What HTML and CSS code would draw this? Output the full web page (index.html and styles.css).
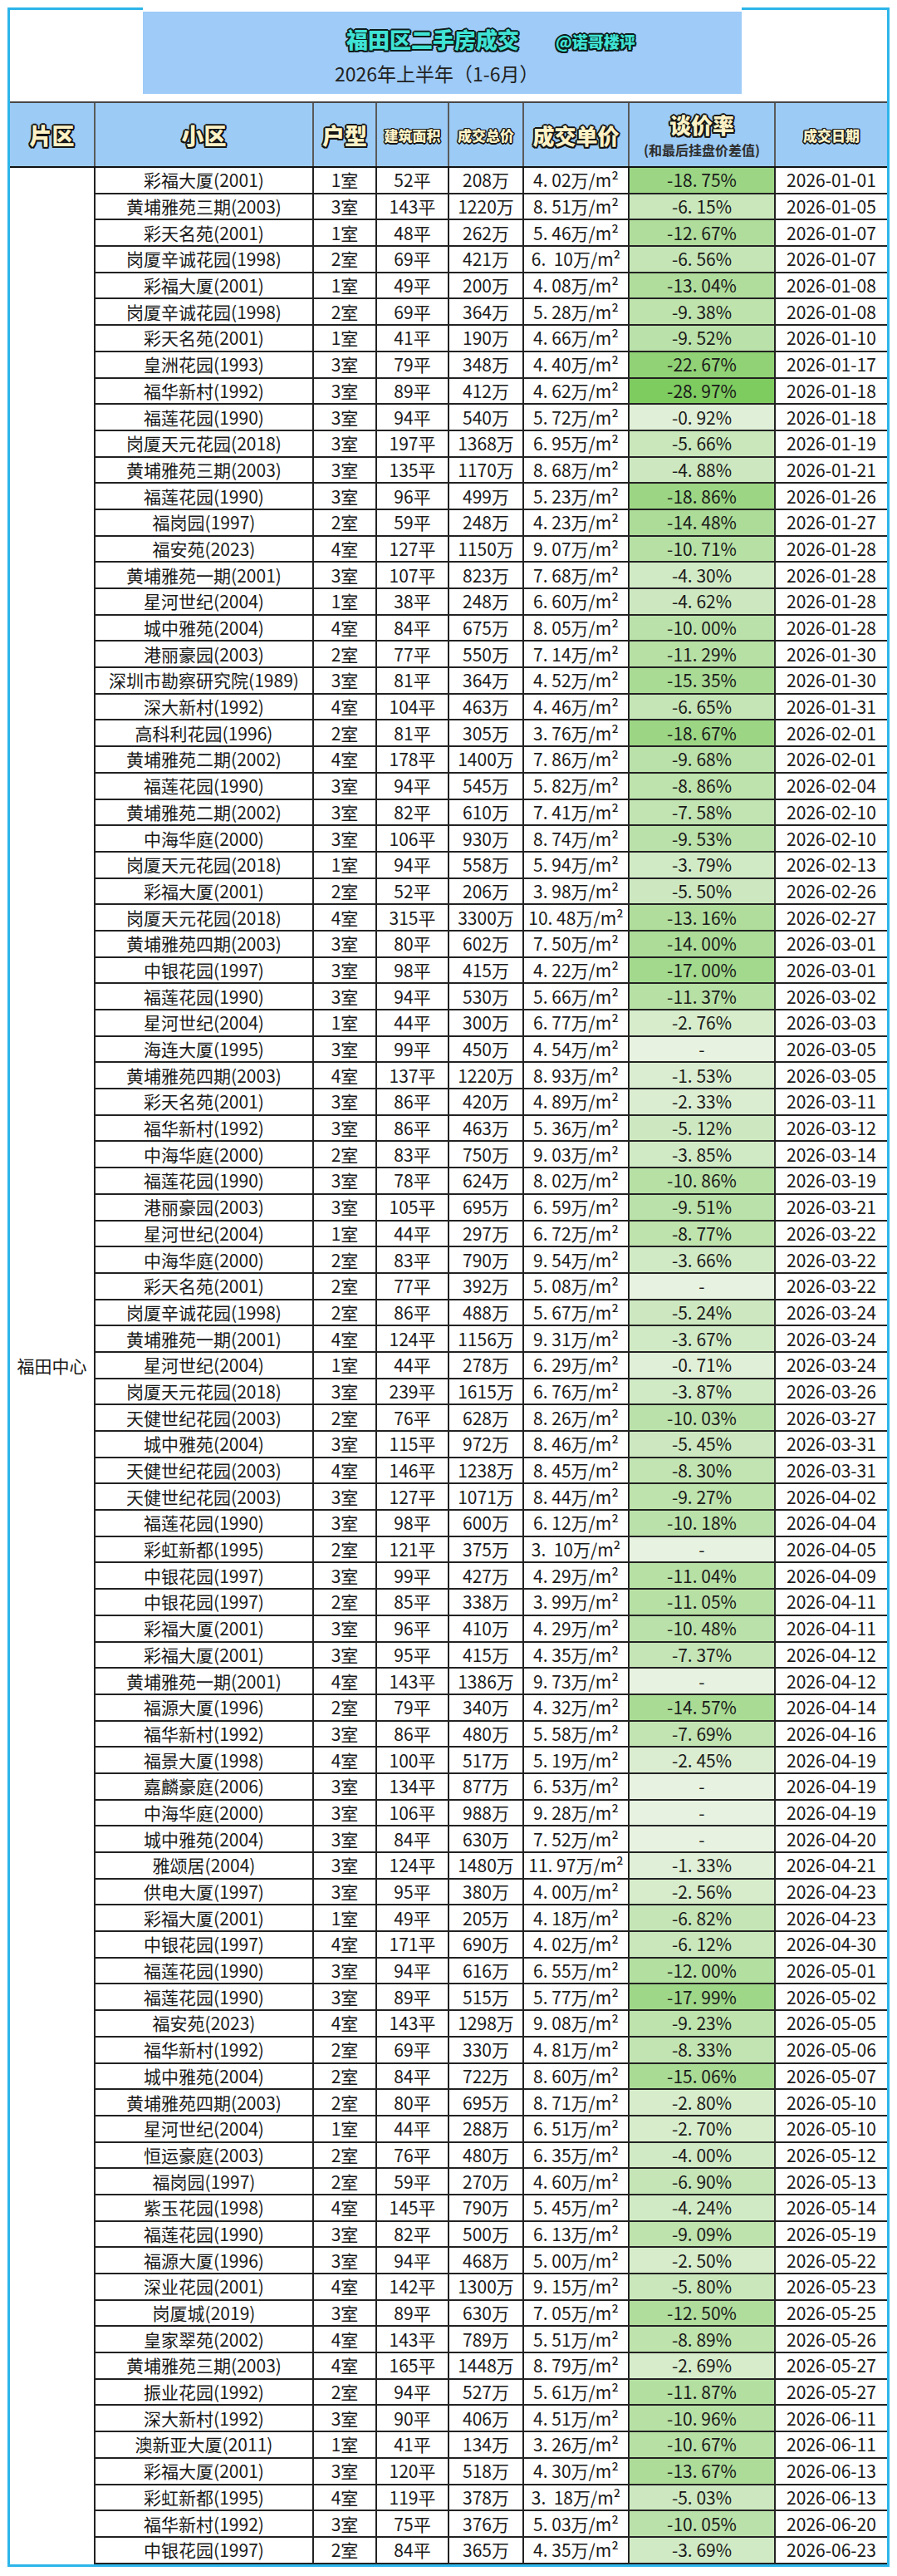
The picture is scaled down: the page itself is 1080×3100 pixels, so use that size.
FILE: index.html
```html
<!DOCTYPE html>
<html lang="zh-CN">
<head>
<meta charset="utf-8">
<title>福田区二手房成交</title>
<link rel="stylesheet" href="styles.css">
</head>
<body>
<div class="frame">
  <div class="top">
    <div class="top-side top-left"></div>
    <div class="banner">
      <div class="title-row">
        <span class="title">福田区二手房成交</span>
        <span class="handle">@诺哥楼评</span>
      </div>
      <div class="subtitle">2026年上半年（1-6月）</div>
    </div>
    <div class="top-side top-right"></div>
  </div>

  <div class="thead">
    <div class="th big">片区</div>
    <div class="th big">小区</div>
    <div class="th big">户型</div>
    <div class="th small">建筑面积</div>
    <div class="th small">成交总价</div>
    <div class="th mid">成交单价</div>
    <div class="th stack"><span class="mid">谈价率</span><span class="note">(和最后挂盘价差值)</span></div>
    <div class="th small">成交日期</div>
  </div>

  <div class="tbody">
    <div class="area">福田中心</div>
<div>彩福大厦(2001)</div><div>1室</div><div>52平</div><div>208万</div><div>4. 02万/m²</div><div style="background:#9cd684">-18. 75%</div><div>2026-01-01</div>
<div>黄埔雅苑三期(2003)</div><div>3室</div><div>143平</div><div>1220万</div><div>8. 51万/m²</div><div style="background:#c9e7bb">-6. 15%</div><div>2026-01-05</div>
<div>彩天名苑(2001)</div><div>1室</div><div>48平</div><div>262万</div><div>5. 46万/m²</div><div style="background:#b0dd9c">-12. 67%</div><div>2026-01-07</div>
<div>岗厦辛诚花园(1998)</div><div>2室</div><div>69平</div><div>421万</div><div>6.&nbsp; 10万/m²</div><div style="background:#c5e5b7">-6. 56%</div><div>2026-01-07</div>
<div>彩福大厦(2001)</div><div>1室</div><div>49平</div><div>200万</div><div>4. 08万/m²</div><div style="background:#b0dd9c">-13. 04%</div><div>2026-01-08</div>
<div>岗厦辛诚花园(1998)</div><div>2室</div><div>69平</div><div>364万</div><div>5. 28万/m²</div><div style="background:#bee3ad">-9. 38%</div><div>2026-01-08</div>
<div>彩天名苑(2001)</div><div>1室</div><div>41平</div><div>190万</div><div>4. 66万/m²</div><div style="background:#bae1a9">-9. 52%</div><div>2026-01-10</div>
<div>皇洲花园(1993)</div><div>3室</div><div>79平</div><div>348万</div><div>4. 40万/m²</div><div style="background:#90d275">-22. 67%</div><div>2026-01-17</div>
<div>福华新村(1992)</div><div>3室</div><div>89平</div><div>412万</div><div>4. 62万/m²</div><div style="background:#7ecb5f">-28. 97%</div><div>2026-01-18</div>
<div>福莲花园(1990)</div><div>3室</div><div>94平</div><div>540万</div><div>5. 72万/m²</div><div style="background:#e0efd7">-0. 92%</div><div>2026-01-18</div>
<div>岗厦天元花园(2018)</div><div>3室</div><div>197平</div><div>1368万</div><div>6. 95万/m²</div><div style="background:#c9e7bb">-5. 66%</div><div>2026-01-19</div>
<div>黄埔雅苑三期(2003)</div><div>3室</div><div>135平</div><div>1170万</div><div>8. 68万/m²</div><div style="background:#cde8c0">-4. 88%</div><div>2026-01-21</div>
<div>福莲花园(1990)</div><div>3室</div><div>96平</div><div>499万</div><div>5. 23万/m²</div><div style="background:#9cd684">-18. 86%</div><div>2026-01-26</div>
<div>福岗园(1997)</div><div>2室</div><div>59平</div><div>248万</div><div>4. 23万/m²</div><div style="background:#acdc98">-14. 48%</div><div>2026-01-27</div>
<div>福安苑(2023)</div><div>4室</div><div>127平</div><div>1150万</div><div>9. 07万/m²</div><div style="background:#b7e0a5">-10. 71%</div><div>2026-01-28</div>
<div>黄埔雅苑一期(2001)</div><div>3室</div><div>107平</div><div>823万</div><div>7. 68万/m²</div><div style="background:#d1eac6">-4. 30%</div><div>2026-01-28</div>
<div>星河世纪(2004)</div><div>1室</div><div>38平</div><div>248万</div><div>6. 60万/m²</div><div style="background:#cde8c0">-4. 62%</div><div>2026-01-28</div>
<div>城中雅苑(2004)</div><div>4室</div><div>84平</div><div>675万</div><div>8. 05万/m²</div><div style="background:#bae1a9">-10. 00%</div><div>2026-01-28</div>
<div>港丽豪园(2003)</div><div>2室</div><div>77平</div><div>550万</div><div>7. 14万/m²</div><div style="background:#b7e0a5">-11. 29%</div><div>2026-01-30</div>
<div>深圳市勘察研究院(1989)</div><div>3室</div><div>81平</div><div>364万</div><div>4. 52万/m²</div><div style="background:#a9db94">-15. 35%</div><div>2026-01-30</div>
<div>深大新村(1992)</div><div>4室</div><div>104平</div><div>463万</div><div>4. 46万/m²</div><div style="background:#c5e5b7">-6. 65%</div><div>2026-01-31</div>
<div>高科利花园(1996)</div><div>2室</div><div>81平</div><div>305万</div><div>3. 76万/m²</div><div style="background:#9cd684">-18. 67%</div><div>2026-02-01</div>
<div>黄埔雅苑二期(2002)</div><div>4室</div><div>178平</div><div>1400万</div><div>7. 86万/m²</div><div style="background:#bae1a9">-9. 68%</div><div>2026-02-01</div>
<div>福莲花园(1990)</div><div>3室</div><div>94平</div><div>545万</div><div>5. 82万/m²</div><div style="background:#bee3ad">-8. 86%</div><div>2026-02-04</div>
<div>黄埔雅苑二期(2002)</div><div>3室</div><div>82平</div><div>610万</div><div>7. 41万/m²</div><div style="background:#c2e4b2">-7. 58%</div><div>2026-02-10</div>
<div>中海华庭(2000)</div><div>3室</div><div>106平</div><div>930万</div><div>8. 74万/m²</div><div style="background:#bae1a9">-9. 53%</div><div>2026-02-10</div>
<div>岗厦天元花园(2018)</div><div>1室</div><div>94平</div><div>558万</div><div>5. 94万/m²</div><div style="background:#d1eac6">-3. 79%</div><div>2026-02-13</div>
<div>彩福大厦(2001)</div><div>2室</div><div>52平</div><div>206万</div><div>3. 98万/m²</div><div style="background:#cde8c0">-5. 50%</div><div>2026-02-26</div>
<div>岗厦天元花园(2018)</div><div>4室</div><div>315平</div><div>3300万</div><div>10. 48万/m²</div><div style="background:#b0dd9c">-13. 16%</div><div>2026-02-27</div>
<div>黄埔雅苑四期(2003)</div><div>3室</div><div>80平</div><div>602万</div><div>7. 50万/m²</div><div style="background:#acdc98">-14. 00%</div><div>2026-03-01</div>
<div>中银花园(1997)</div><div>3室</div><div>98平</div><div>415万</div><div>4. 22万/m²</div><div style="background:#a2d98c">-17. 00%</div><div>2026-03-01</div>
<div>福莲花园(1990)</div><div>3室</div><div>94平</div><div>530万</div><div>5. 66万/m²</div><div style="background:#b7e0a5">-11. 37%</div><div>2026-03-02</div>
<div>星河世纪(2004)</div><div>1室</div><div>44平</div><div>300万</div><div>6. 77万/m²</div><div style="background:#d6eccb">-2. 76%</div><div>2026-03-03</div>
<div>海连大厦(1995)</div><div>3室</div><div>99平</div><div>450万</div><div>4. 54万/m²</div><div style="background:#e7f2e0">-</div><div>2026-03-05</div>
<div>黄埔雅苑四期(2003)</div><div>4室</div><div>137平</div><div>1220万</div><div>8. 93万/m²</div><div style="background:#dbedd1">-1. 53%</div><div>2026-03-05</div>
<div>彩天名苑(2001)</div><div>3室</div><div>86平</div><div>420万</div><div>4. 89万/m²</div><div style="background:#dbedd1">-2. 33%</div><div>2026-03-11</div>
<div>福华新村(1992)</div><div>3室</div><div>86平</div><div>463万</div><div>5. 36万/m²</div><div style="background:#cde8c0">-5. 12%</div><div>2026-03-12</div>
<div>中海华庭(2000)</div><div>2室</div><div>83平</div><div>750万</div><div>9. 03万/m²</div><div style="background:#d1eac6">-3. 85%</div><div>2026-03-14</div>
<div>福莲花园(1990)</div><div>3室</div><div>78平</div><div>624万</div><div>8. 02万/m²</div><div style="background:#b7e0a5">-10. 86%</div><div>2026-03-19</div>
<div>港丽豪园(2003)</div><div>3室</div><div>105平</div><div>695万</div><div>6. 59万/m²</div><div style="background:#bae1a9">-9. 51%</div><div>2026-03-21</div>
<div>星河世纪(2004)</div><div>1室</div><div>44平</div><div>297万</div><div>6. 72万/m²</div><div style="background:#bee3ad">-8. 77%</div><div>2026-03-22</div>
<div>中海华庭(2000)</div><div>2室</div><div>83平</div><div>790万</div><div>9. 54万/m²</div><div style="background:#d1eac6">-3. 66%</div><div>2026-03-22</div>
<div>彩天名苑(2001)</div><div>2室</div><div>77平</div><div>392万</div><div>5. 08万/m²</div><div style="background:#e7f2e0">-</div><div>2026-03-22</div>
<div>岗厦辛诚花园(1998)</div><div>2室</div><div>86平</div><div>488万</div><div>5. 67万/m²</div><div style="background:#cde8c0">-5. 24%</div><div>2026-03-24</div>
<div>黄埔雅苑一期(2001)</div><div>4室</div><div>124平</div><div>1156万</div><div>9. 31万/m²</div><div style="background:#d1eac6">-3. 67%</div><div>2026-03-24</div>
<div>星河世纪(2004)</div><div>1室</div><div>44平</div><div>278万</div><div>6. 29万/m²</div><div style="background:#e0efd7">-0. 71%</div><div>2026-03-24</div>
<div>岗厦天元花园(2018)</div><div>3室</div><div>239平</div><div>1615万</div><div>6. 76万/m²</div><div style="background:#d1eac6">-3. 87%</div><div>2026-03-26</div>
<div>天健世纪花园(2003)</div><div>2室</div><div>76平</div><div>628万</div><div>8. 26万/m²</div><div style="background:#bae1a9">-10. 03%</div><div>2026-03-27</div>
<div>城中雅苑(2004)</div><div>3室</div><div>115平</div><div>972万</div><div>8. 46万/m²</div><div style="background:#cde8c0">-5. 45%</div><div>2026-03-31</div>
<div>天健世纪花园(2003)</div><div>4室</div><div>146平</div><div>1238万</div><div>8. 45万/m²</div><div style="background:#c2e4b2">-8. 30%</div><div>2026-03-31</div>
<div>天健世纪花园(2003)</div><div>3室</div><div>127平</div><div>1071万</div><div>8. 44万/m²</div><div style="background:#bee3ad">-9. 27%</div><div>2026-04-02</div>
<div>福莲花园(1990)</div><div>3室</div><div>98平</div><div>600万</div><div>6. 12万/m²</div><div style="background:#bae1a9">-10. 18%</div><div>2026-04-04</div>
<div>彩虹新都(1995)</div><div>2室</div><div>121平</div><div>375万</div><div>3.&nbsp; 10万/m²</div><div style="background:#e7f2e0">-</div><div>2026-04-05</div>
<div>中银花园(1997)</div><div>3室</div><div>99平</div><div>427万</div><div>4. 29万/m²</div><div style="background:#b7e0a5">-11. 04%</div><div>2026-04-09</div>
<div>中银花园(1997)</div><div>2室</div><div>85平</div><div>338万</div><div>3. 99万/m²</div><div style="background:#b7e0a5">-11. 05%</div><div>2026-04-11</div>
<div>彩福大厦(2001)</div><div>3室</div><div>96平</div><div>410万</div><div>4. 29万/m²</div><div style="background:#bae1a9">-10. 48%</div><div>2026-04-11</div>
<div>彩福大厦(2001)</div><div>3室</div><div>95平</div><div>415万</div><div>4. 35万/m²</div><div style="background:#c5e5b7">-7. 37%</div><div>2026-04-12</div>
<div>黄埔雅苑一期(2001)</div><div>4室</div><div>143平</div><div>1386万</div><div>9. 73万/m²</div><div style="background:#e7f2e0">-</div><div>2026-04-12</div>
<div>福源大厦(1996)</div><div>2室</div><div>79平</div><div>340万</div><div>4. 32万/m²</div><div style="background:#a9db94">-14. 57%</div><div>2026-04-14</div>
<div>福华新村(1992)</div><div>3室</div><div>86平</div><div>480万</div><div>5. 58万/m²</div><div style="background:#c2e4b2">-7. 69%</div><div>2026-04-16</div>
<div>福景大厦(1998)</div><div>4室</div><div>100平</div><div>517万</div><div>5. 19万/m²</div><div style="background:#dbedd1">-2. 45%</div><div>2026-04-19</div>
<div>嘉麟豪庭(2006)</div><div>3室</div><div>134平</div><div>877万</div><div>6. 53万/m²</div><div style="background:#e7f2e0">-</div><div>2026-04-19</div>
<div>中海华庭(2000)</div><div>3室</div><div>106平</div><div>988万</div><div>9. 28万/m²</div><div style="background:#e7f2e0">-</div><div>2026-04-19</div>
<div>城中雅苑(2004)</div><div>3室</div><div>84平</div><div>630万</div><div>7. 52万/m²</div><div style="background:#e7f2e0">-</div><div>2026-04-20</div>
<div>雅颂居(2004)</div><div>3室</div><div>124平</div><div>1480万</div><div>11. 97万/m²</div><div style="background:#e0efd7">-1. 33%</div><div>2026-04-21</div>
<div>供电大厦(1997)</div><div>3室</div><div>95平</div><div>380万</div><div>4. 00万/m²</div><div style="background:#d6eccb">-2. 56%</div><div>2026-04-23</div>
<div>彩福大厦(2001)</div><div>1室</div><div>49平</div><div>205万</div><div>4. 18万/m²</div><div style="background:#c5e5b7">-6. 82%</div><div>2026-04-23</div>
<div>中银花园(1997)</div><div>4室</div><div>171平</div><div>690万</div><div>4. 02万/m²</div><div style="background:#c9e7bb">-6. 12%</div><div>2026-04-30</div>
<div>福莲花园(1990)</div><div>3室</div><div>94平</div><div>616万</div><div>6. 55万/m²</div><div style="background:#b3dfa0">-12. 00%</div><div>2026-05-01</div>
<div>福莲花园(1990)</div><div>3室</div><div>89平</div><div>515万</div><div>5. 77万/m²</div><div style="background:#9fd788">-17. 99%</div><div>2026-05-02</div>
<div>福安苑(2023)</div><div>4室</div><div>143平</div><div>1298万</div><div>9. 08万/m²</div><div style="background:#bee3ad">-9. 23%</div><div>2026-05-05</div>
<div>福华新村(1992)</div><div>2室</div><div>69平</div><div>330万</div><div>4. 81万/m²</div><div style="background:#c2e4b2">-8. 33%</div><div>2026-05-06</div>
<div>城中雅苑(2004)</div><div>2室</div><div>84平</div><div>722万</div><div>8. 60万/m²</div><div style="background:#a9db94">-15. 06%</div><div>2026-05-07</div>
<div>黄埔雅苑四期(2003)</div><div>2室</div><div>80平</div><div>695万</div><div>8. 71万/m²</div><div style="background:#d6eccb">-2. 80%</div><div>2026-05-10</div>
<div>星河世纪(2004)</div><div>1室</div><div>44平</div><div>288万</div><div>6. 51万/m²</div><div style="background:#d6eccb">-2. 70%</div><div>2026-05-10</div>
<div>恒运豪庭(2003)</div><div>2室</div><div>76平</div><div>480万</div><div>6. 35万/m²</div><div style="background:#d1eac6">-4. 00%</div><div>2026-05-12</div>
<div>福岗园(1997)</div><div>2室</div><div>59平</div><div>270万</div><div>4. 60万/m²</div><div style="background:#c5e5b7">-6. 90%</div><div>2026-05-13</div>
<div>紫玉花园(1998)</div><div>4室</div><div>145平</div><div>790万</div><div>5. 45万/m²</div><div style="background:#d1eac6">-4. 24%</div><div>2026-05-14</div>
<div>福莲花园(1990)</div><div>3室</div><div>82平</div><div>500万</div><div>6. 13万/m²</div><div style="background:#bee3ad">-9. 09%</div><div>2026-05-19</div>
<div>福源大厦(1996)</div><div>3室</div><div>94平</div><div>468万</div><div>5. 00万/m²</div><div style="background:#d6eccb">-2. 50%</div><div>2026-05-22</div>
<div>深业花园(2001)</div><div>4室</div><div>142平</div><div>1300万</div><div>9. 15万/m²</div><div style="background:#c9e7bb">-5. 80%</div><div>2026-05-23</div>
<div>岗厦城(2019)</div><div>3室</div><div>89平</div><div>630万</div><div>7. 05万/m²</div><div style="background:#b0dd9c">-12. 50%</div><div>2026-05-25</div>
<div>皇家翠苑(2002)</div><div>4室</div><div>143平</div><div>789万</div><div>5. 51万/m²</div><div style="background:#bee3ad">-8. 89%</div><div>2026-05-26</div>
<div>黄埔雅苑三期(2003)</div><div>4室</div><div>165平</div><div>1448万</div><div>8. 79万/m²</div><div style="background:#d6eccb">-2. 69%</div><div>2026-05-27</div>
<div>振业花园(1992)</div><div>2室</div><div>94平</div><div>527万</div><div>5. 61万/m²</div><div style="background:#b3dfa0">-11. 87%</div><div>2026-05-27</div>
<div>深大新村(1992)</div><div>3室</div><div>90平</div><div>406万</div><div>4. 51万/m²</div><div style="background:#b7e0a5">-10. 96%</div><div>2026-06-11</div>
<div>澳新亚大厦(2011)</div><div>1室</div><div>41平</div><div>134万</div><div>3. 26万/m²</div><div style="background:#b7e0a5">-10. 67%</div><div>2026-06-11</div>
<div>彩福大厦(2001)</div><div>3室</div><div>120平</div><div>518万</div><div>4. 30万/m²</div><div style="background:#acdc98">-13. 67%</div><div>2026-06-13</div>
<div>彩虹新都(1995)</div><div>4室</div><div>119平</div><div>378万</div><div>3.&nbsp; 18万/m²</div><div style="background:#cde8c0">-5. 03%</div><div>2026-06-13</div>
<div>福华新村(1992)</div><div>3室</div><div>75平</div><div>376万</div><div>5. 03万/m²</div><div style="background:#bae1a9">-10. 05%</div><div>2026-06-20</div>
<div>中银花园(1997)</div><div>2室</div><div>84平</div><div>365万</div><div>4. 35万/m²</div><div style="background:#d1eac6">-3. 69%</div><div>2026-06-23</div>
  </div>
</div>
</body>
</html>
```

FILE: styles.css
```css
* { box-sizing: border-box; }

body {
  margin: 0;
  background: #ffffff;
  font-family: "Noto Sans CJK SC", "Noto Sans", sans-serif;
  color: #1a1a1a;
}

.frame {
  margin: 9px 0 0 9px;
  width: 1062px;
  border: 3px solid #2db5ea;
  border-top: 0;
}

/* ---------- title area ---------- */
.top {
  display: flex;
  height: 113px;
}
.top-side { border-top: 3px solid #2db5ea; }
.top-left { width: 160px; }
.top-right { flex: 1; }

.banner {
  width: 721px;
  height: 99px;
  margin-top: 5px;
  background: #9ecbf8;
  padding: 13px 0 0 231px;
  display: flex;
  flex-direction: column;
}

.title-row {
  display: flex;
  align-items: baseline;
  gap: 44px;
  margin-left: 14px;
  height: 40px;
}

.title,
.handle {
  font-weight: 900;
  color: #3fe3d5;
  line-height: 40px;
  text-shadow:
    2px 0 0 #0f1c1c, -2px 0 0 #0f1c1c, 0 2px 0 #0f1c1c, 0 -2px 0 #0f1c1c,
    1.5px 1.5px 0 #0f1c1c, -1.5px 1.5px 0 #0f1c1c, 1.5px -1.5px 0 #0f1c1c, -1.5px -1.5px 0 #0f1c1c;
}
.title { font-size: 26px; }
.handle { font-size: 19px; }

.subtitle {
  margin-top: 6px;
  font-size: 23px;
  line-height: 30px;
  color: #222;
}

/* ---------- header ---------- */
.thead,
.tbody {
  display: grid;
  grid-template-columns: 101px 263px 76px 87px 90px 127px 176px 136px;
}

.thead {
  height: 80px;
  background: #9ccbf6;
  border-top: 2px solid #474747;
  border-bottom: 2px solid #111;
}

.th {
  display: flex;
  align-items: center;
  justify-content: center;
  border-left: 2px solid #5a5a5a;
  font-weight: 900;
  color: #fcf2c6;
  white-space: nowrap;
}
.th:first-child { border-left: 0; }

.big,
.mid {
  text-shadow:
    2px 0 0 #141414, -2px 0 0 #141414, 0 2px 0 #141414, 0 -2px 0 #141414,
    1.5px 1.5px 0 #141414, -1.5px 1.5px 0 #141414, 1.5px -1.5px 0 #141414, -1.5px -1.5px 0 #141414;
}
.big { font-size: 27px; }
.mid { font-size: 26px; }

.small {
  font-size: 17px;
  text-shadow:
    1.5px 0 0 #141414, -1.5px 0 0 #141414, 0 1.5px 0 #141414, 0 -1.5px 0 #141414,
    1px 1px 0 #141414, -1px 1px 0 #141414, 1px -1px 0 #141414, -1px -1px 0 #141414;
}

.stack {
  flex-direction: column;
  gap: 2px;
}
.stack .mid { line-height: 34px; }
.note {
  font-size: 16px;
  font-weight: 700;
  color: #2e2e2e;
  line-height: 22px;
  text-shadow: none;
}

/* ---------- body ---------- */
.tbody {
  grid-auto-rows: 31.7px;
  font-size: 21px;
}

.tbody > div {
  display: flex;
  align-items: center;
  justify-content: center;
  white-space: pre;
  border-left: 2px solid #222;
  border-bottom: 2px solid #222;
  line-height: 1;
}

.tbody > .area {
  grid-column: 1;
  grid-row: 1 / span 91;
  border-left: 0;
  border-bottom: 0;
}
```
